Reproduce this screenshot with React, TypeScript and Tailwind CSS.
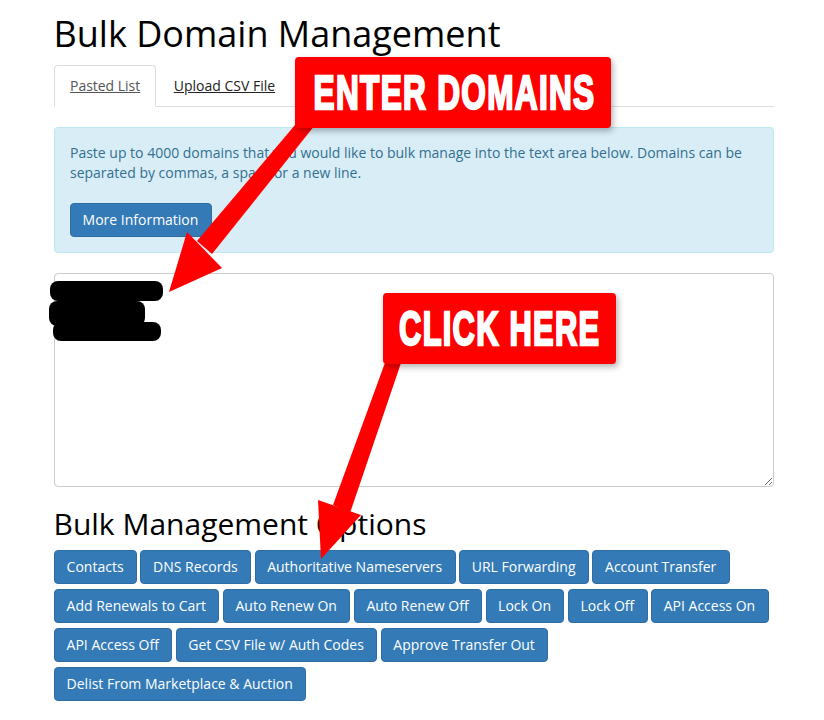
const options = [
  'Contacts',
  'DNS Records',
  'Authoritative Nameservers',
  'URL Forwarding',
  'Account Transfer',
  'Add Renewals to Cart',
  'Auto Renew On',
  'Auto Renew Off',
  'Lock On',
  'Lock Off',
  'API Access On',
  'API Access Off',
  'Get CSV File w/ Auth Codes',
  'Approve Transfer Out',
  'Delist From Marketplace & Auction',
];

function Btn({ label }: { label: string }) {
  return (
    <button className="h-[34px] pl-[11.6px] pr-[12.4px] rounded-[4px] border border-[#2e6da4] bg-[#337ab7] text-white text-[14px] leading-[20px] whitespace-nowrap">
      {label}
    </button>
  );
}

export default function App() {
  return (
    <div className="relative h-[720px] overflow-hidden bg-white text-[14px] text-black font-['Open_Sans',sans-serif]">
      <div className="w-[720px] ml-[54px] pt-[14px] flex flex-col gap-[20px]">
        <div className="flex flex-col gap-[11px]">
          <h1 className="-ml-[0.5px] text-[36px] leading-[40px] font-normal">Bulk Domain Management</h1>

          {/* Tabs */}
          <div className="flex h-[42px] border-b border-[#dddddd]">
            <a className="h-[42px] px-[15px] pt-[10px] leading-[20px] tracking-[-0.02px] border border-b-white border-[#dddddd] rounded-t-[4px] bg-white text-[#555555] underline">
              Pasted List
            </a>
            <a className="ml-[2px] px-[15.5px] pt-[11px] leading-[20px] text-[#222222] underline">Upload CSV File</a>
          </div>
        </div>

        {/* Info box */}
        <div className="h-[126px] p-[15px] flex flex-col items-start gap-[20px] rounded-[4px] border border-[#bce8f1] bg-[#d9edf7] text-[#31708f] leading-[20px] tracking-[-0.005px]">
          <p>
            Paste up to 4000 domains that you would like to bulk manage into the text area below. Domains can be
            separated by commas, a space or a new line.
          </p>
          <Btn label="More Information" />
        </div>

        <textarea className="block w-[720px] h-[214px] resize-y rounded-[4px] border border-[#cccccc] bg-white" />

        <div className="flex flex-col gap-[10px]">
          <h3 className="-ml-[0.5px] text-[30px] leading-[33px] font-normal">Bulk Management Options</h3>
          <div className="flex flex-wrap gap-x-[3.5px] gap-y-[5px]">
            {options.map((label) => (
              <Btn key={label} label={label} />
            ))}
          </div>
        </div>
      </div>

      {/* Redaction marks */}
      <div className="absolute left-[50px] top-[281px] w-[113px] h-[20px] rounded-[8px] bg-black" />
      <div className="absolute left-[49px] top-[301px] w-[96px] h-[25px] rounded-[8px] bg-black" />
      <div className="absolute left-[53px] top-[322px] w-[108px] h-[19px] rounded-[8px] bg-black" />

      {/* Arrows */}
      <svg className="absolute left-0 top-0" width="824" height="720" viewBox="0 0 824 720">
        <path d="M295 125L315 125L212 254L197 241Z" fill="#ff0000" />
        <path d="M187 232L222 268L169 292Z" fill="#ff0000" />
        <path d="M386 360L402 360L350 513L333 505Z" fill="#ff0000" />
        <path d="M318 500L361 515L321 559Z" fill="#ff0000" />
      </svg>

      {/* Callouts */}
      <div className="absolute left-[295px] top-[57px] w-[316px] h-[71px] rounded-[4px] bg-[#ff0000] shadow-[2px_3px_6px_rgba(0,0,0,0.3)] flex items-center justify-center">
        <span className="ml-[4px] font-['Liberation_Sans',sans-serif] font-bold text-white text-[49px] leading-none tracking-[2px] whitespace-nowrap scale-x-[0.645] [-webkit-text-stroke:2.5px_white]">
          ENTER DOMAINS
        </span>
      </div>
      <div className="absolute left-[383px] top-[293px] w-[233px] h-[71px] rounded-[4px] bg-[#ff0000] shadow-[2px_3px_6px_rgba(0,0,0,0.3)] flex items-center justify-center">
        <span className="font-['Liberation_Sans',sans-serif] font-bold text-white text-[49px] leading-none tracking-[2px] whitespace-nowrap scale-x-[0.63] [-webkit-text-stroke:2.5px_white]">
          CLICK HERE
        </span>
      </div>
    </div>
  );
}
